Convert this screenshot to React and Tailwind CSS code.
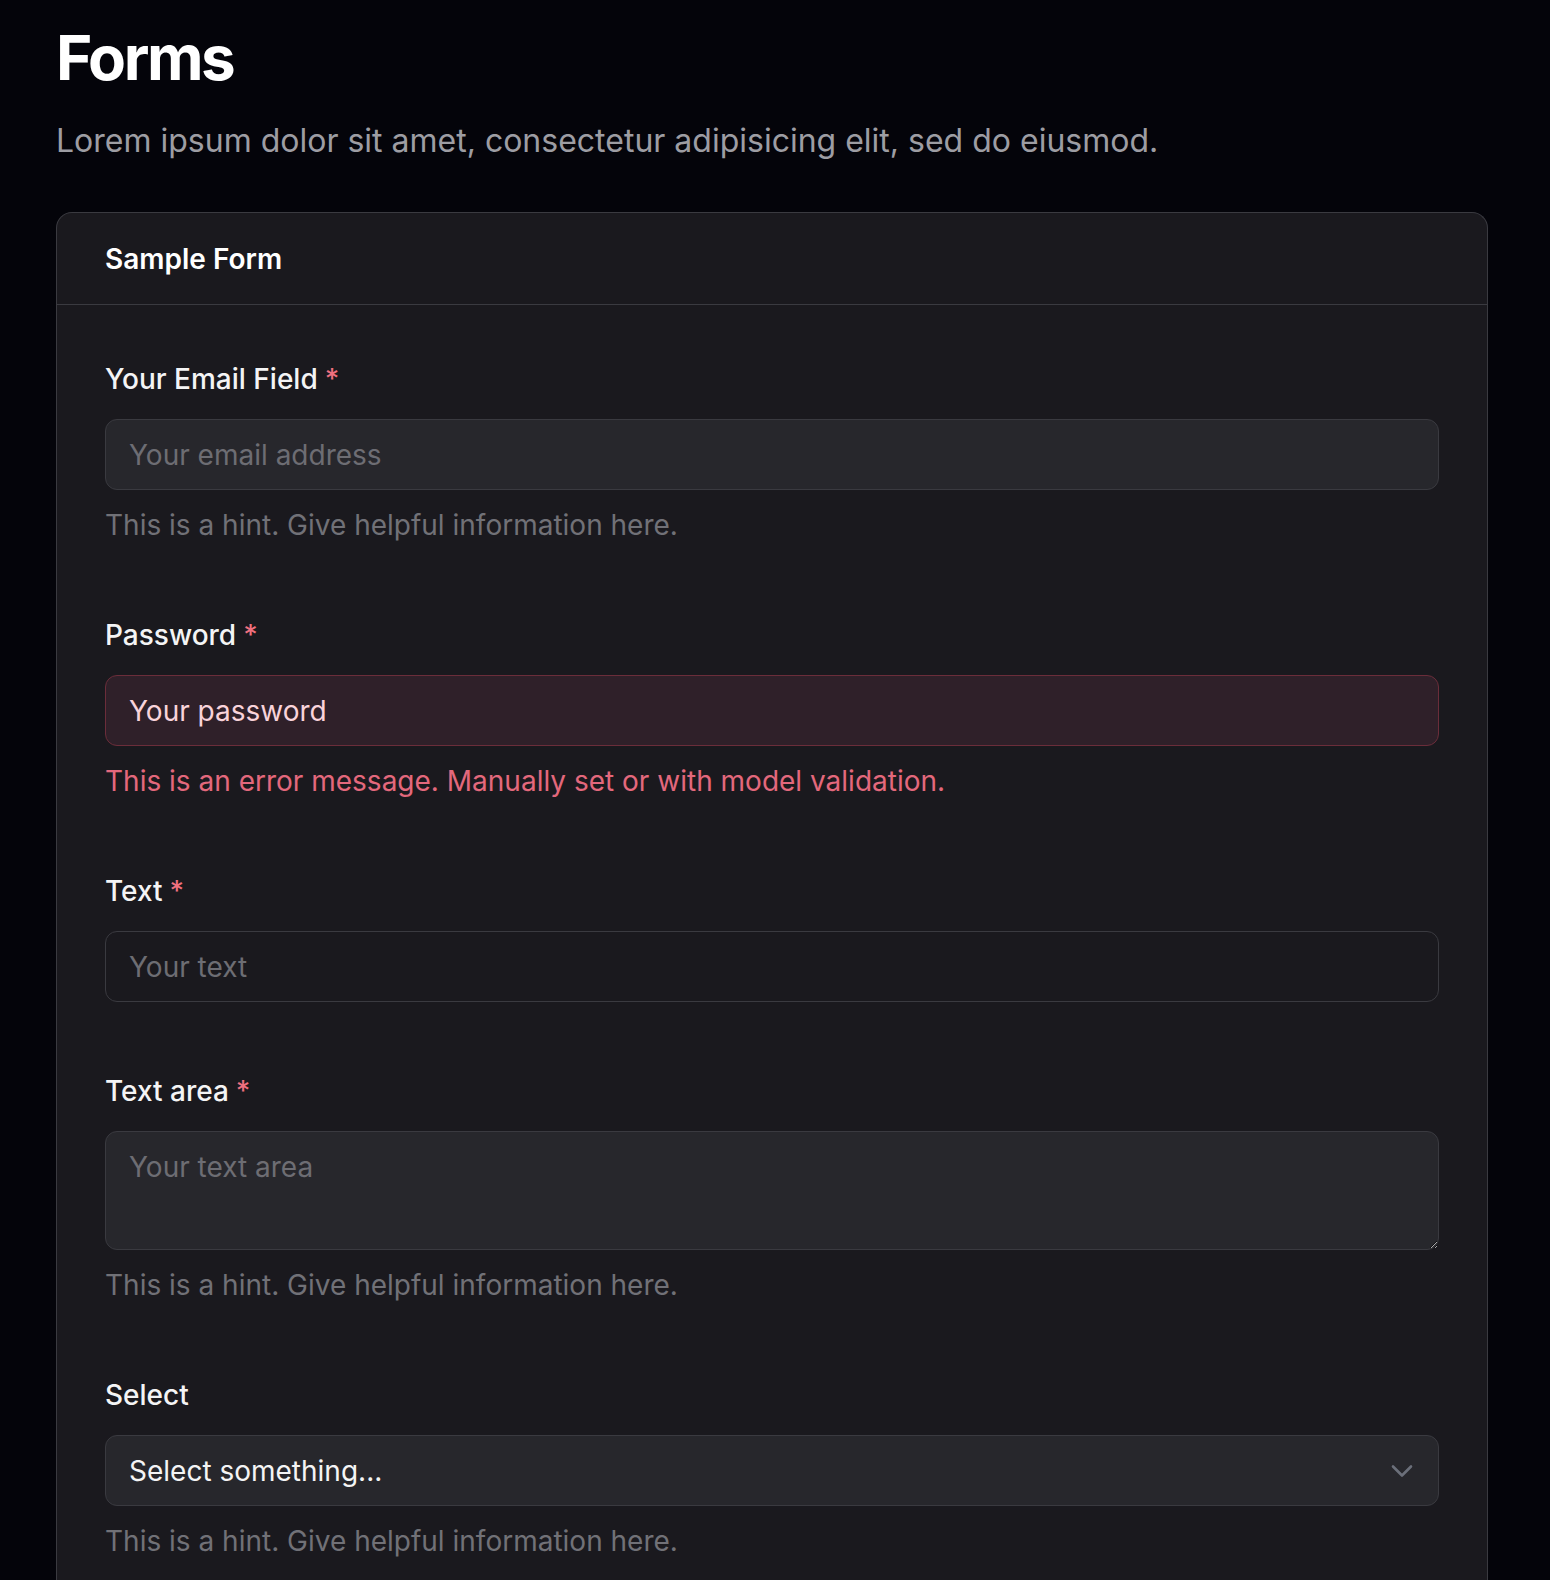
import React from 'react'

const font = { fontFamily: 'Inter, "Noto Sans", sans-serif' }

function Label({ children, required }) {
  return (
    <label className="block text-[28px] leading-[42px] font-medium text-[#f4f4f5]">
      {children}
      {required && <span className="ml-[7px] text-[#f0707f]">*</span>}
    </label>
  )
}

function Hint({ children, error }) {
  return (
    <p className={`mt-[14px] text-[28px] leading-[42px] ${error ? 'text-[#e3687c]' : 'text-[#717177]'}`}>
      {children}
    </p>
  )
}

const inputBase =
  'mt-[19px] block w-full rounded-[12px] border px-[23px] py-[13.5px] text-[28px] leading-[42px] outline-none'

export default function App() {
  return (
    <div className="min-h-screen bg-[#04040a] pl-[56px] pr-[62px] pt-[27px]" style={font}>
      <h1 className="text-[62px] leading-[62px] font-bold tracking-[-0.04em] text-white">Forms</h1>
      <p className="mt-[28px] text-[32px] leading-[47px] text-[#9d9da3]">
        Lorem ipsum dolor sit amet, consectetur adipisicing elit, sed do eiusmod.
      </p>

      <div className="mt-[48px] rounded-t-2xl border border-b-0 border-[#3a3a40] bg-[#1a191e]">
        <div className="flex h-[92px] items-center border-b border-[#3a3a40] px-[48px]">
          <h2 className="text-[28px] leading-[42px] font-semibold text-white">Sample Form</h2>
        </div>

        <div className="flex flex-col gap-[68px] px-[48px] pt-[53px] pb-[60px]">
          <div>
            <Label required>Your Email Field</Label>
            <input
              className={`${inputBase} border-[#3a3a40] bg-[#27272c] text-white placeholder:text-[#6d6d73]`}
              placeholder="Your email address"
            />
            <Hint>This is a hint. Give helpful information here.</Hint>
          </div>

          <div>
            <Label required>Password</Label>
            <input
              className={`${inputBase} border-[#6b2d3a] bg-[#2f2029] text-[#f9d3da] placeholder:text-[#f9d3da]`}
              placeholder="Your password"
            />
            <Hint error>This is an error message. Manually set or with model validation.</Hint>
          </div>

          <div>
            <Label required>Text</Label>
            <input
              className={`${inputBase} border-[#3a3a40] bg-transparent text-white placeholder:text-[#6d6d73]`}
              placeholder="Your text"
            />
          </div>

          <div>
            <Label required>Text area</Label>
            <textarea
              className={`${inputBase} h-[119px] border-[#3a3a40] bg-[#27272c] text-white placeholder:text-[#6d6d73]`}
              placeholder="Your text area"
            />
            <Hint>This is a hint. Give helpful information here.</Hint>
          </div>

          <div>
            <Label>Select</Label>
            <div className="relative mt-[19px]">
              <select className="block w-full appearance-none rounded-[12px] border border-[#3a3a40] bg-[#27272c] px-[23px] py-[13.5px] text-[28px] leading-[42px] text-[#f4f4f5] outline-none">
                <option>Select something...</option>
              </select>
              <svg
                className="pointer-events-none absolute right-[26px] top-1/2 -translate-y-1/2"
                width="22"
                height="13"
                viewBox="0 0 22 13"
                fill="none"
              >
                <path d="M2 2l9 9 9-9" stroke="#6b6f7a" strokeWidth="2.6" strokeLinecap="round" strokeLinejoin="round" />
              </svg>
            </div>
            <Hint>This is a hint. Give helpful information here.</Hint>
          </div>
        </div>
      </div>
    </div>
  )
}
